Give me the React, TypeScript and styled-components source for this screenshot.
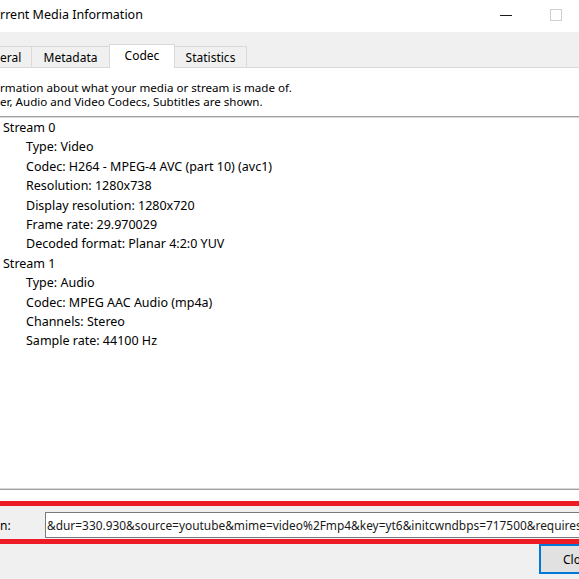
import React from "react";
import styled, { createGlobalStyle } from "styled-components";

const Global = createGlobalStyle`
  html, body { margin: 0; padding: 0; }
  body {
    width: 579px;
    height: 579px;
    overflow: hidden;
    background: #f0f0f0;
    font-family: "Noto Sans", "Open Sans", sans-serif;
    color: #000;
  }
`;

const Window = styled.div`
  width: 579px;
  height: 579px;
  display: flex;
  flex-direction: column;
  overflow: hidden;
  font-size: 12px;
`;

const TitleBar = styled.div`
  height: 32px;
  flex: none;
  background: #fff;
  display: flex;
  align-items: center;
`;

const Title = styled.div`
  flex: 1;
  font-size: 12.5px;
  padding-bottom: 3px;
`;

const Controls = styled.div`
  display: flex;
  align-items: center;
  gap: 38px;
  margin-right: 17px;
  padding-bottom: 3px;
`;

const MinGlyph = styled.div`
  width: 12px;
  height: 1px;
  background: #1a1a1a;
  margin-top: 2px;
`;

const MaxGlyph = styled.div`
  width: 10px;
  height: 10px;
  border: 1px solid #cfcfcf;
`;

const TabBar = styled.div`
  height: 35px;
  flex: none;
  display: flex;
  align-items: flex-end;
  background: #f0f0f0;
`;

const Tab = styled.div<{ $active?: boolean; $w: number; $clipped?: boolean }>`
  width: ${(p) => p.$w}px;
  height: ${(p) => (p.$active ? 24 : 21)}px;
  box-sizing: border-box;
  border: 1px solid #d9d9d9;
  border-bottom: none;
  border-left: ${(p) => (p.$clipped ? "none" : "1px solid #d9d9d9")};
  margin-left: ${(p) => (p.$clipped ? 0 : -1)}px;
  background: ${(p) => (p.$active ? "#fff" : "#f0f0f0")};
  display: flex;
  align-items: center;
  justify-content: ${(p) => (p.$clipped ? "flex-start" : "center")};
  padding-bottom: ${(p) => (p.$active ? 3 : 0)}px;
  font-size: 12px;
  position: relative;
  z-index: ${(p) => (p.$active ? 1 : 0)};
  margin-bottom: ${(p) => (p.$active ? -1 : 0)}px;
`;

const Page = styled.div`
  height: 433px;
  flex: none;
  background: #fff;
  border-top: 1px solid #d9d9d9;
  display: flex;
  flex-direction: column;
`;

const Description = styled.div`
  padding-top: 13px;
  line-height: 14px;
  height: 35px;
  font-size: 11.6px;
  white-space: nowrap;
`;

const Tree = styled.div`
  height: 374px;
  flex: none;
  border-top: 1px solid #a0a0a0;
  border-bottom: 1px solid #a0a0a0;
  box-shadow: inset 0 1px 0 #d8d8d8, inset 0 -1px 0 #d8d8d8;
  padding-top: 1px;
  box-sizing: border-box;
`;

const Row = styled.div<{ $depth: number }>`
  height: 19.4px;
  line-height: 19.4px;
  padding-left: ${(p) => (p.$depth ? 26 : 3)}px;
  font-size: 12.5px;
  white-space: nowrap;
`;

const LocationRow = styled.div`
  flex: none;
  border-top: 5px solid #ed1c24;
  border-bottom: 5px solid #ed1c24;
  padding: 6px 0 1px 0;
  display: flex;
  align-items: center;
`;

const Label = styled.div`
  width: 45px;
  font-size: 12px;
  flex: none;
`;

const Input = styled.div`
  flex: 1;
  height: 26px;
  box-sizing: border-box;
  background: #fff;
  border: 1px solid #7a7a7a;
  border-right: none;
  display: flex;
  align-items: center;
  padding-left: 1px;
  overflow: hidden;
  white-space: nowrap;
  font-size: 11.9px;
  color: #1a1a1a;
`;

const Footer = styled.div`
  flex: 1;
  display: flex;
  justify-content: flex-end;
  align-items: flex-start;
  background: #f0f0f0;
`;

const Button = styled.div`
  width: 75px;
  height: 30px;
  flex: none;
  box-sizing: border-box;
  margin-right: -35px;
  border: 2px solid #0078d7;
  background: #e1e1e1;
  display: flex;
  align-items: center;
  padding-left: 22px;
  font-size: 12px;
`;

const tree: { text: string; depth: number }[] = [
  { text: "Stream 0", depth: 0 },
  { text: "Type: Video", depth: 1 },
  { text: "Codec: H264 - MPEG-4 AVC (part 10) (avc1)", depth: 1 },
  { text: "Resolution: 1280x738", depth: 1 },
  { text: "Display resolution: 1280x720", depth: 1 },
  { text: "Frame rate: 29.970029", depth: 1 },
  { text: "Decoded format: Planar 4:2:0 YUV", depth: 1 },
  { text: "Stream 1", depth: 0 },
  { text: "Type: Audio", depth: 1 },
  { text: "Codec: MPEG AAC Audio (mp4a)", depth: 1 },
  { text: "Channels: Stereo", depth: 1 },
  { text: "Sample rate: 44100 Hz", depth: 1 },
];

export default function App() {
  return (
    <>
      <Global />
      <Window>
        <TitleBar>
          <Title>rrent Media Information</Title>
          <Controls>
            <MinGlyph />
            <MaxGlyph />
          </Controls>
        </TitleBar>
        <TabBar>
          <Tab $w={32} $clipped>
            eral
          </Tab>
          <Tab $w={79}>Metadata</Tab>
          <Tab $w={66} $active>
            Codec
          </Tab>
          <Tab $w={73}>Statistics</Tab>
        </TabBar>
        <Page>
          <Description>
            rmation about what your media or stream is made of.
            <br />
            er, Audio and Video Codecs, Subtitles are shown.
          </Description>
          <Tree>
            {tree.map((r, i) => (
              <Row key={i} $depth={r.depth}>
                {r.text}
              </Row>
            ))}
          </Tree>
        </Page>
        <LocationRow>
          <Label>n:</Label>
          <Input>
            &amp;dur=330.930&amp;source=youtube&amp;mime=video%2Fmp4&amp;key=yt6&amp;initcwndbps=717500&amp;requiressl=yes
          </Input>
        </LocationRow>
        <Footer>
          <Button>Close</Button>
        </Footer>
      </Window>
    </>
  );
}
